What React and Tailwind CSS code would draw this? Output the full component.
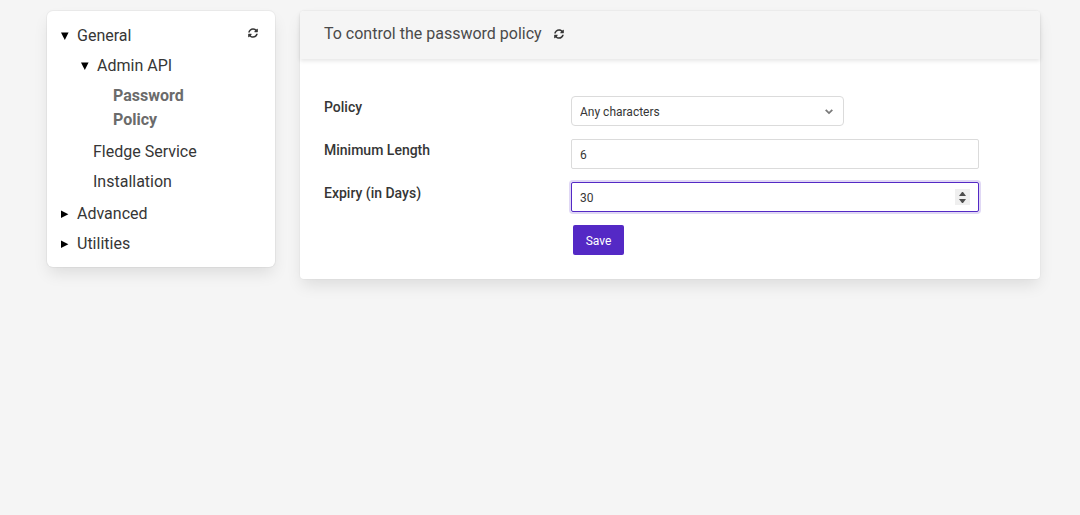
import { useState } from "react";
import { FaSyncAlt } from "react-icons/fa";

function Triangle({ open }) {
  return (
    <svg className="size-2 shrink-0" viewBox="0 0 8 8" fill="#000" aria-hidden="true">
      {open ? <path d="M0 0.5h7.6L3.8 8z" /> : <path d="M0 0.5v7.5L7.4 4.2z" />}
    </svg>
  );
}

function Branch({ label, defaultOpen = false, className = "", children }) {
  const [open, setOpen] = useState(defaultOpen);
  return (
    <li className={className}>
      <button
        type="button"
        aria-expanded={open}
        onClick={() => setOpen(!open)}
        className="flex h-6 items-center gap-2 text-base leading-6"
      >
        <Triangle open={open} />
        {label}
      </button>
      {open && children}
    </li>
  );
}

function RefreshButton({ label }) {
  return (
    <button type="button" aria-label={label} className="text-[#363636]">
      <FaSyncAlt className="size-[10px]" />
    </button>
  );
}

function Sidebar() {
  return (
    <aside className="flex w-[228px] shrink-0 items-start justify-between rounded-md bg-white pt-[13px] pr-[17px] pb-[11px] pl-[14px] text-[#363636] shadow-[0_8px_16px_-2px_rgba(10,10,10,0.1),0_0_0_1px_rgba(10,10,10,0.04)]">
      <ul className="flex flex-col gap-[6px]">
        <Branch label="General" defaultOpen className="pb-[2px]">
          <ul className="mt-[6px] flex flex-col gap-[6px]">
            <Branch label="Admin API" defaultOpen className="pb-[2px] pl-5">
              <a
                href="#password-policy"
                className="mt-[6px] ml-8 block w-24 text-base leading-6 font-bold text-[#6b6b6b]"
              >
                Password Policy
              </a>
            </Branch>
            <li className="pl-8">
              <a href="#fledge-service" className="block leading-6">Fledge Service</a>
            </li>
            <li className="pl-8">
              <a href="#installation" className="block leading-6">Installation</a>
            </li>
          </ul>
        </Branch>
        <Branch label="Advanced" />
        <Branch label="Utilities" />
      </ul>
      <div className="flex h-[18px] items-center">
        <RefreshButton label="Refresh categories" />
      </div>
    </aside>
  );
}

function Field({ id, label, children }) {
  return (
    <div className="grid grid-cols-[247px_1fr]">
      <label htmlFor={id} className="text-sm leading-[22px] font-medium text-[#363636]">
        {label}
      </label>
      {children}
    </div>
  );
}

function Stepper({ onStep }) {
  return (
    <div className="absolute top-[7px] right-[9px] flex h-4 w-[15px] flex-col bg-[#efefef]">
      <button
        type="button"
        tabIndex={-1}
        aria-label="Increase"
        onClick={() => onStep(1)}
        className="flex h-2 items-end justify-center pb-px"
      >
        <svg className="h-1 w-[7px]" viewBox="0 0 7 4" fill="#4d4d4d" aria-hidden="true">
          <path d="M0 4L3 0H4L7 4z" />
        </svg>
      </button>
      <button
        type="button"
        tabIndex={-1}
        aria-label="Decrease"
        onClick={() => onStep(-1)}
        className="flex h-2 items-start justify-center pt-[2px]"
      >
        <svg className="h-1 w-[7px]" viewBox="0 0 7 4" fill="#4d4d4d" aria-hidden="true">
          <path d="M0 0H7L4 4H3z" />
        </svg>
      </button>
    </div>
  );
}

const inputStyle =
  "h-[30px] w-full appearance-none rounded-xs border bg-white px-2 pt-[2px] text-xs text-[#363636] outline-none [&::-webkit-inner-spin-button]:appearance-none";

function PolicyCard() {
  const [minLength, setMinLength] = useState("6");
  const [expiry, setExpiry] = useState("30");
  return (
    <section className="min-w-0 flex-1 rounded-sm bg-white shadow-[0_8px_16px_-2px_rgba(10,10,10,0.1),0_0_0_1px_rgba(10,10,10,0.02)]">
      <header className="flex h-12 items-center gap-3 rounded-t-sm bg-[#f5f5f5] px-6 pb-[2px] shadow-[0_2px_4px_rgba(10,10,10,0.1)]">
        <h1 className="text-base leading-6 text-[#4a4a4a]">To control the password policy</h1>
        <RefreshButton label="Refresh configuration" />
      </header>
      <form
        className="flex flex-col gap-[13px] pt-[37px] pr-[61px] pb-6 pl-6"
        onSubmit={(event) => event.preventDefault()}
      >
        <Field id="policy" label="Policy">
          <div className="relative w-[67%]">
            <select
              id="policy"
              className="h-[30px] w-full appearance-none rounded-sm border border-[#dbdbdb] bg-white px-2 pt-[2px] text-xs text-[#363636] outline-none"
            >
              <option>Any characters</option>
            </select>
            <svg
              className="pointer-events-none absolute top-[13px] right-[11px] h-[6px] w-2"
              viewBox="0 0 8 6"
              fill="none"
              stroke="#7a7a7a"
              strokeWidth="1.8"
              aria-hidden="true"
            >
              <path d="M0.7 0.8L4 4.1L7.3 0.8" />
            </svg>
          </div>
        </Field>
        <Field id="min-length" label="Minimum Length">
          <input
            id="min-length"
            type="number"
            value={minLength}
            onChange={(event) => setMinLength(event.target.value)}
            className={`${inputStyle} border-[#dbdbdb]`}
          />
        </Field>
        <Field id="expiry" label="Expiry (in Days)">
          <div className="relative">
            <input
              id="expiry"
              type="number"
              value={expiry}
              onChange={(event) => setExpiry(event.target.value)}
              className={`${inputStyle} border-[#5429c5] shadow-[0_0_0_2px_rgba(84,41,197,0.18)]`}
            />
            <Stepper onStep={(by) => setExpiry(String(Number(expiry) + by))} />
          </div>
        </Field>
        <div className="pl-[249px]">
          <button
            type="submit"
            className="block h-[30px] w-[51px] rounded-xs bg-[#5429c5] pt-[2px] text-xs text-white"
          >
            Save
          </button>
        </div>
      </form>
    </section>
  );
}

export default function App() {
  return (
    <div className="min-h-screen bg-[#f5f5f5] font-['Roboto',sans-serif]">
      <main className="flex items-start gap-[25px] pt-[11px] pr-10 pb-6 pl-[47px]">
        <Sidebar />
        <PolicyCard />
      </main>
    </div>
  );
}
